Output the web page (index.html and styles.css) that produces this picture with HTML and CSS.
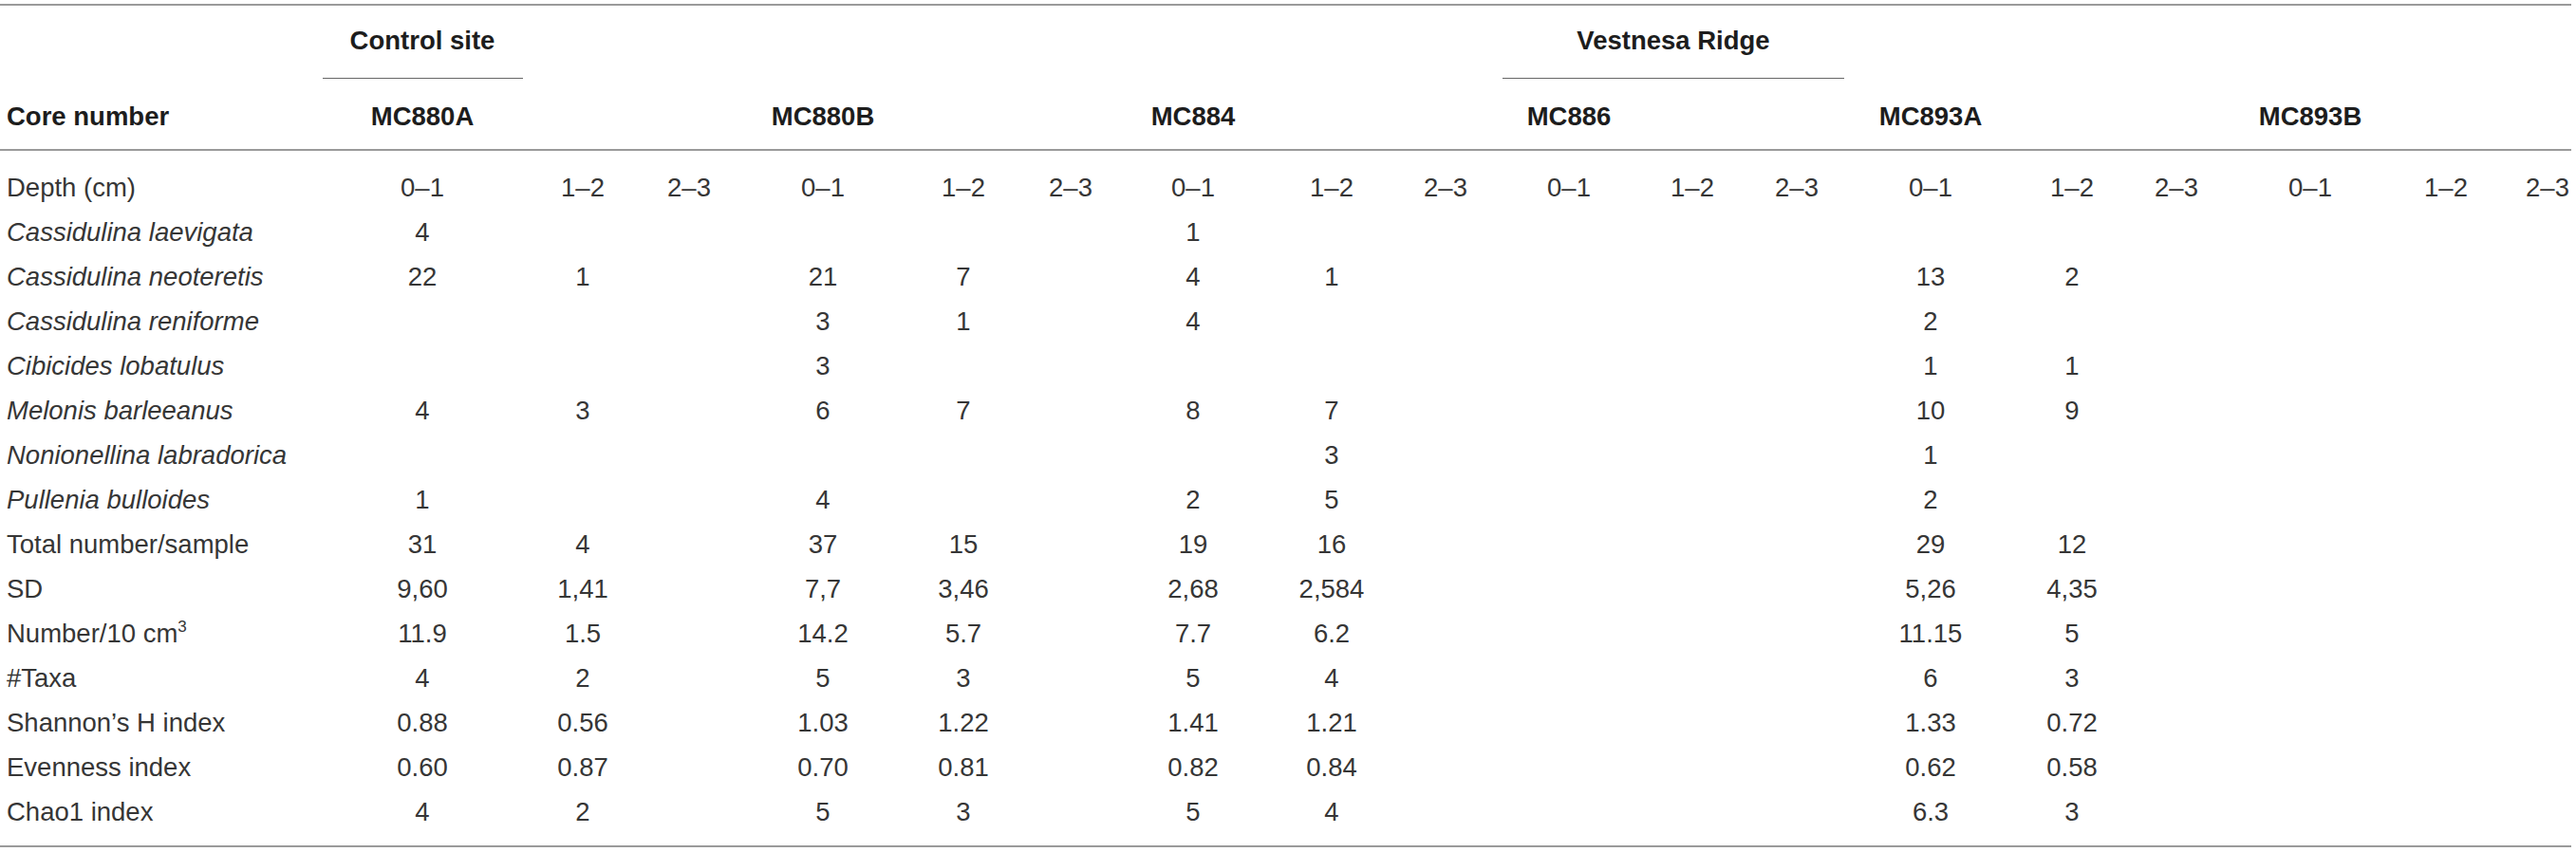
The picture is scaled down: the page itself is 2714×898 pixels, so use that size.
FILE: index.html
```html
<!DOCTYPE html>
<html lang="en">
<head>
    <meta charset="UTF-8">
    <meta name="viewport" content="width=device-width, initial-scale=1.0">
    <title>Benthic foraminifera counts</title>
    <link rel="stylesheet" href="styles.css">
</head>
<body>
    <div class="tbl">
        <!-- site groups -->
        <div class="row group">
            <div class="site"><span>Control site</span></div>
            <div class="ridge"><span>Vestnesa Ridge</span></div>
        </div>

        <!-- core names -->
        <div class="row head">
            <div class="lbl">Core number</div>
            <div>MC880A</div><div></div><div></div>
            <div>MC880B</div><div></div><div></div>
            <div>MC884</div><div></div><div></div>
            <div>MC886</div><div></div><div></div>
            <div>MC893A</div><div></div><div></div>
            <div>MC893B</div><div></div><div></div>
        </div>

        <div class="body">
            <div class="row">
                <div class="lbl">Depth (cm)</div>
                <div>0–1</div><div>1–2</div><div>2–3</div>
                <div>0–1</div><div>1–2</div><div>2–3</div>
                <div>0–1</div><div>1–2</div><div>2–3</div>
                <div>0–1</div><div>1–2</div><div>2–3</div>
                <div>0–1</div><div>1–2</div><div>2–3</div>
                <div>0–1</div><div>1–2</div><div>2–3</div>
            </div>
            <div class="row">
                <div class="lbl"><i>Cassidulina laevigata</i></div>
                <div>4</div><div></div><div></div>
                <div></div><div></div><div></div>
                <div>1</div>
            </div>
            <div class="row">
                <div class="lbl"><i>Cassidulina neoteretis</i></div>
                <div>22</div><div>1</div><div></div>
                <div>21</div><div>7</div><div></div>
                <div>4</div><div>1</div><div></div>
                <div></div><div></div><div></div>
                <div>13</div><div>2</div>
            </div>
            <div class="row">
                <div class="lbl"><i>Cassidulina reniforme</i></div>
                <div></div><div></div><div></div>
                <div>3</div><div>1</div><div></div>
                <div>4</div><div></div><div></div>
                <div></div><div></div><div></div>
                <div>2</div>
            </div>
            <div class="row">
                <div class="lbl"><i>Cibicides lobatulus</i></div>
                <div></div><div></div><div></div>
                <div>3</div><div></div><div></div>
                <div></div><div></div><div></div>
                <div></div><div></div><div></div>
                <div>1</div><div>1</div>
            </div>
            <div class="row">
                <div class="lbl"><i>Melonis barleeanus</i></div>
                <div>4</div><div>3</div><div></div>
                <div>6</div><div>7</div><div></div>
                <div>8</div><div>7</div><div></div>
                <div></div><div></div><div></div>
                <div>10</div><div>9</div>
            </div>
            <div class="row">
                <div class="lbl"><i>Nonionellina labradorica</i></div>
                <div></div><div></div><div></div>
                <div></div><div></div><div></div>
                <div></div><div>3</div><div></div>
                <div></div><div></div><div></div>
                <div>1</div>
            </div>
            <div class="row">
                <div class="lbl"><i>Pullenia bulloides</i></div>
                <div>1</div><div></div><div></div>
                <div>4</div><div></div><div></div>
                <div>2</div><div>5</div><div></div>
                <div></div><div></div><div></div>
                <div>2</div>
            </div>
            <div class="row">
                <div class="lbl">Total number/sample</div>
                <div>31</div><div>4</div><div></div>
                <div>37</div><div>15</div><div></div>
                <div>19</div><div>16</div><div></div>
                <div></div><div></div><div></div>
                <div>29</div><div>12</div>
            </div>
            <div class="row">
                <div class="lbl">SD</div>
                <div>9,60</div><div>1,41</div><div></div>
                <div>7,7</div><div>3,46</div><div></div>
                <div>2,68</div><div>2,584</div><div></div>
                <div></div><div></div><div></div>
                <div>5,26</div><div>4,35</div>
            </div>
            <div class="row">
                <div class="lbl">Number/10 cm<sup>3</sup></div>
                <div>11.9</div><div>1.5</div><div></div>
                <div>14.2</div><div>5.7</div><div></div>
                <div>7.7</div><div>6.2</div><div></div>
                <div></div><div></div><div></div>
                <div>11.15</div><div>5</div>
            </div>
            <div class="row">
                <div class="lbl">#Taxa</div>
                <div>4</div><div>2</div><div></div>
                <div>5</div><div>3</div><div></div>
                <div>5</div><div>4</div><div></div>
                <div></div><div></div><div></div>
                <div>6</div><div>3</div>
            </div>
            <div class="row">
                <div class="lbl">Shannon’s H index</div>
                <div>0.88</div><div>0.56</div><div></div>
                <div>1.03</div><div>1.22</div><div></div>
                <div>1.41</div><div>1.21</div><div></div>
                <div></div><div></div><div></div>
                <div>1.33</div><div>0.72</div>
            </div>
            <div class="row">
                <div class="lbl">Evenness index</div>
                <div>0.60</div><div>0.87</div><div></div>
                <div>0.70</div><div>0.81</div><div></div>
                <div>0.82</div><div>0.84</div><div></div>
                <div></div><div></div><div></div>
                <div>0.62</div><div>0.58</div>
            </div>
            <div class="row">
                <div class="lbl">Chao1 index</div>
                <div>4</div><div>2</div><div></div>
                <div>5</div><div>3</div><div></div>
                <div>5</div><div>4</div><div></div>
                <div></div><div></div><div></div>
                <div>6.3</div><div>3</div>
            </div>
        </div>
    </div>
</body>
</html>
```

FILE: styles.css
```css
body {
    margin: 0;
    background-color: #fff;
    font-family: "Liberation Sans", Arial, sans-serif;
    font-size: 27.5px;
    color: #363636;
}

.tbl {
    width: 2709px;
    margin-top: 4px;
    border-top: 2px solid #9a9a9a;
    border-bottom: 2px solid #9a9a9a;
}

/* one column per depth slice, each centred on its numbers */
.row {
    display: grid;
    grid-template-columns: 297px 296px 42px 182px 100px 196px 30px 228px 64px 176px 84px 176px 44px 238px 60px 160px 122px 164px 50px;
}

.row > div {
    display: flex;
    justify-content: center;
    white-space: nowrap;
}

.row > .lbl {
    display: block;
    padding-left: 7px;
}

.group {
    padding-top: 20px;
    line-height: 34px;
    font-weight: 700;
    color: #1d1d1d;
}

.group .site {
    grid-column: 2;
}

.group .ridge {
    grid-column: 11 / 14;
}

.site span,
.ridge span {
    display: block;
    flex: none;
    text-align: center;
    padding-bottom: 22px;
    border-bottom: 1px solid #666;
}

.site span {
    width: 211px;
}

.ridge span {
    width: 360px;
}

.head {
    padding: 23px 0 17px;
    line-height: 34px;
    font-weight: 700;
    color: #1d1d1d;
    border-bottom: 2px solid #9a9a9a;
}

.body {
    padding: 15px 0 12px;
}

.body .row {
    line-height: 47px;
}

sup {
    font-size: 17px;
    line-height: 0;
    vertical-align: 11px;
}
```
